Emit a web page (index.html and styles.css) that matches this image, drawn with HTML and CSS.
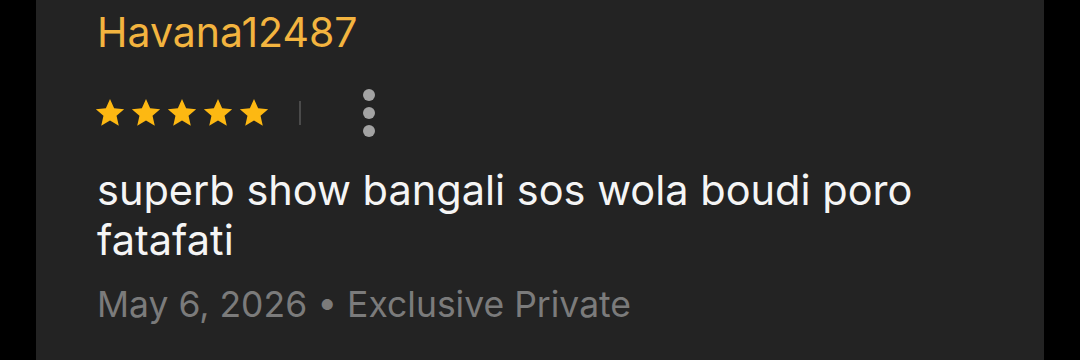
FILE: index.html
```html
<!DOCTYPE html>
<html>
<head>
<meta charset="utf-8">
<link rel="stylesheet" href="styles.css">
</head>
<body>
<div class="page">
  <div class="card">
    <div class="user">Havana12487</div>
    <div class="meta-row">
      <div class="stars">
        <svg class="star" viewBox="0 0 24 24"><path d="M12 1.5l3.1 6.9 7.5.7-5.7 5 1.7 7.4L12 17.7l-6.6 3.8 1.7-7.4-5.7-5 7.5-.7z"/></svg>
        <svg class="star" viewBox="0 0 24 24"><path d="M12 1.5l3.1 6.9 7.5.7-5.7 5 1.7 7.4L12 17.7l-6.6 3.8 1.7-7.4-5.7-5 7.5-.7z"/></svg>
        <svg class="star" viewBox="0 0 24 24"><path d="M12 1.5l3.1 6.9 7.5.7-5.7 5 1.7 7.4L12 17.7l-6.6 3.8 1.7-7.4-5.7-5 7.5-.7z"/></svg>
        <svg class="star" viewBox="0 0 24 24"><path d="M12 1.5l3.1 6.9 7.5.7-5.7 5 1.7 7.4L12 17.7l-6.6 3.8 1.7-7.4-5.7-5 7.5-.7z"/></svg>
        <svg class="star" viewBox="0 0 24 24"><path d="M12 1.5l3.1 6.9 7.5.7-5.7 5 1.7 7.4L12 17.7l-6.6 3.8 1.7-7.4-5.7-5 7.5-.7z"/></svg>
      </div>
      <div class="divider"></div>
      <div class="more"><span></span><span></span><span></span></div>
    </div>
    <div class="text">superb show bangali sos wola boudi poro fatafati</div>
    <div class="date">May 6, 2026 • Exclusive Private</div>
  </div>
</div>
</body>
</html>
```
FILE: styles.css
```css
html, body {
  margin: 0;
  padding: 0;
  background: #000;
}
.page {
  width: 1080px;
  height: 360px;
  display: flex;
  background: #000;
}
.card {
  margin-left: 36px;
  width: 1008px;
  height: 360px;
  background: #232323;
  box-sizing: border-box;
  padding: 8px 0 0 61px;
  font-family: Inter, "Noto Sans", sans-serif;
  display: flex;
  flex-direction: column;
}
.user {
  color: #f3b43f;
  font-size: 41px;
  line-height: 48px;
  height: 48px;
}
.meta-row {
  margin-top: 37px;
  display: flex;
  align-items: center;
  height: 40px;
}
.stars {
  display: flex;
  gap: 4px;
  margin-left: -3px;
}
.star {
  width: 32px;
  height: 32px;
  fill: #fdb812;
}
.divider {
  width: 2px;
  height: 24px;
  background: #4a4a4a;
  margin-left: 29px;
}
.more {
  margin-left: 62px;
  display: flex;
  flex-direction: column;
  gap: 6px;
}
.more span {
  width: 12px;
  height: 12px;
  border-radius: 50%;
  background: #a3a3a3;
}
.text {
  margin-top: 32px;
  color: #f5f5f5;
  font-size: 41.5px;
  line-height: 50px;
  width: 870px;
}
.date {
  margin-top: 15px;
  color: #7b7b7b;
  font-size: 35.5px;
  line-height: 50px;
}
```
